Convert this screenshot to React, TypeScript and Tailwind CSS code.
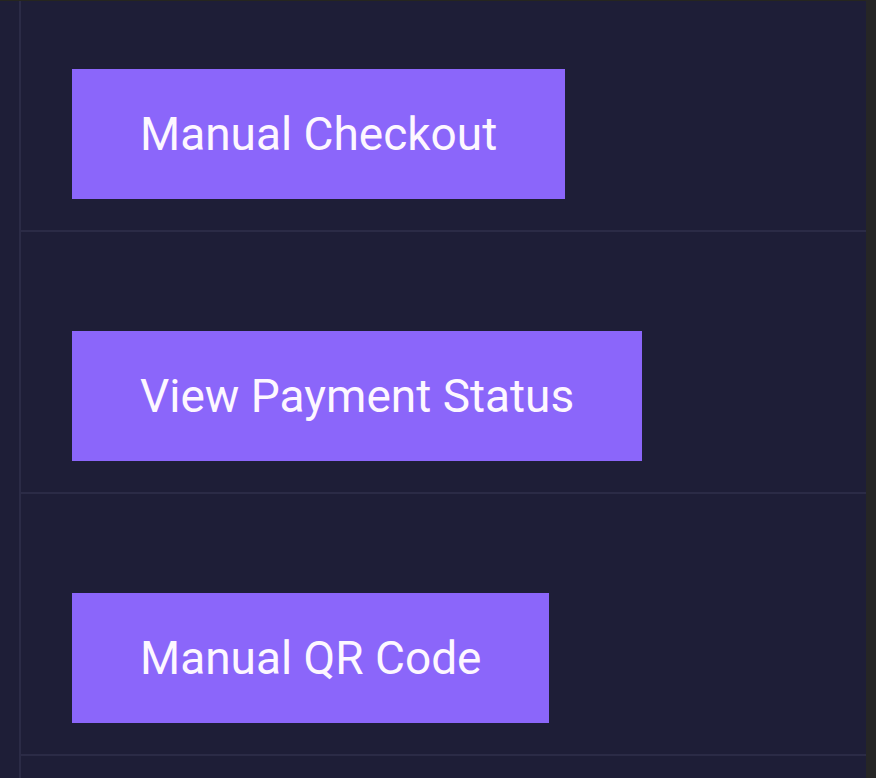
const actions = ['Manual Checkout', 'View Payment Status', 'Manual QR Code'];

export default function App() {
  return (
    <div className="w-[876px] h-[778px] bg-[#262626] flex overflow-hidden font-['Roboto',sans-serif]">
      <div className="w-[866px] h-full bg-[#1e1e37] border-t border-[#26261f] pl-[19px]">
        <div className="border-l-2 border-[#2b2b46] h-full">
          {actions.map((label, i) => (
            <div
              key={label}
              className={`border-b-2 border-[#2b2b46] pl-[51px] pb-[31px] ${i === 0 ? 'pt-[68px]' : 'pt-[99px]'}`}
            >
              <button className="h-[130px] px-[68px] bg-[#8b66fa] text-[#fdf7ff] text-[46px] leading-none flex items-center">
                {label}
              </button>
            </div>
          ))}
        </div>
      </div>
    </div>
  );
}
